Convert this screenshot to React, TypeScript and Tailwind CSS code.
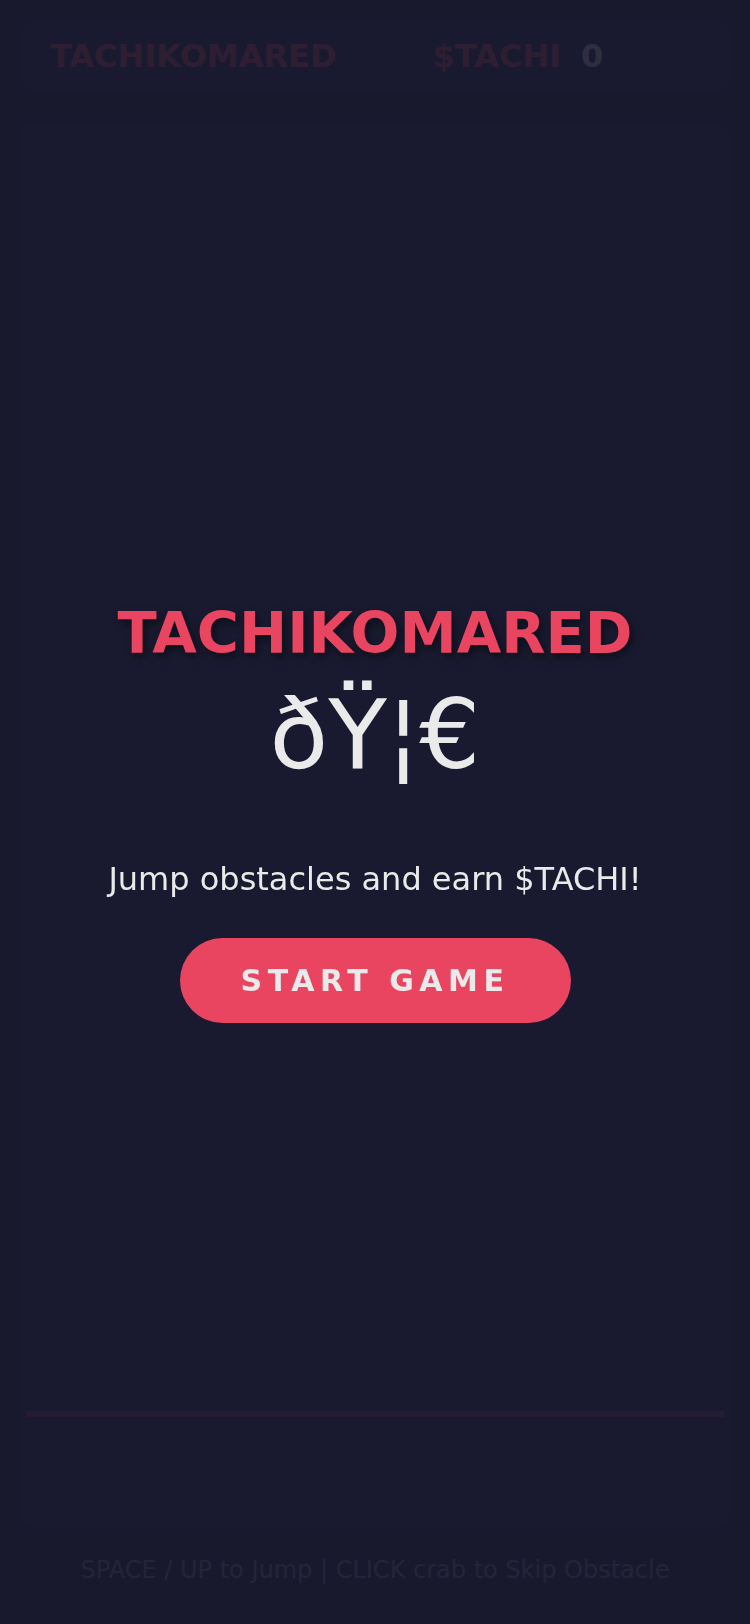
import { useState } from "react";

const font = { fontFamily: '"DejaVu Sans", Verdana, sans-serif' };

function Header({ score }: { score: number }) {
  return (
    <div className="h-[72px] shrink-0 rounded-[15px] bg-[#16213e] px-[30px] flex items-center gap-[96px]">
      <div className="text-[32px] font-bold text-[#e94560] leading-none">TACHIKOMARED</div>
      <div className="flex items-center gap-[20px] text-[32px] font-bold leading-none">
        <span className="text-[#e94560]">$TACHI</span>
        <span className="text-[#eaeaea]">{score}</span>
      </div>
    </div>
  );
}

function GameArea() {
  return (
    <div className="mt-[30px] h-[1406px] shrink-0 rounded-[15px] bg-[#16213e] px-[6px] pb-[111px] flex flex-col justify-end">
      {/* ground strip */}
      <div className="h-[6px] w-full bg-[#e94560]/60" />
    </div>
  );
}

function StartScreen({ onStart }: { onStart: () => void }) {
  return (
    <div className="fixed inset-0 bg-[#1a1a2e]/90 flex flex-col items-center justify-center text-center">
      <h1 className="text-[57.5px] font-bold leading-[66px] text-[#e94560] [text-shadow:3px_4px_8px_rgba(0,0,0,0.45)]">
        TACHIKOMARED
      </h1>
      <div className="mt-[12px] text-[96px] leading-[112px] text-[#eaeaea]">ðŸ¦€</div>
      <p className="mt-[70px] text-[32px] leading-[37px] text-[#eaeaea]">Jump obstacles and earn $TACHI!</p>
      <button
        onClick={onStart}
        className="mt-[40px] w-[391px] h-[85px] rounded-full bg-[#e94560] text-[30px] font-bold tracking-[5.5px] text-[#eaeaea] flex items-center justify-center"
      >
        START GAME
      </button>
    </div>
  );
}

export default function App() {
  const [started, setStarted] = useState(false);

  return (
    <div style={font} className="min-h-screen bg-[#1a1a2e] p-[20px] flex flex-col">
      <Header score={0} />
      <GameArea />
      <div className="mt-[28px] text-center text-[24px] leading-[28px] text-[#888899]">
        SPACE / UP to Jump | CLICK crab to Skip Obstacle
      </div>
      {!started && <StartScreen onStart={() => setStarted(true)} />}
    </div>
  );
}
